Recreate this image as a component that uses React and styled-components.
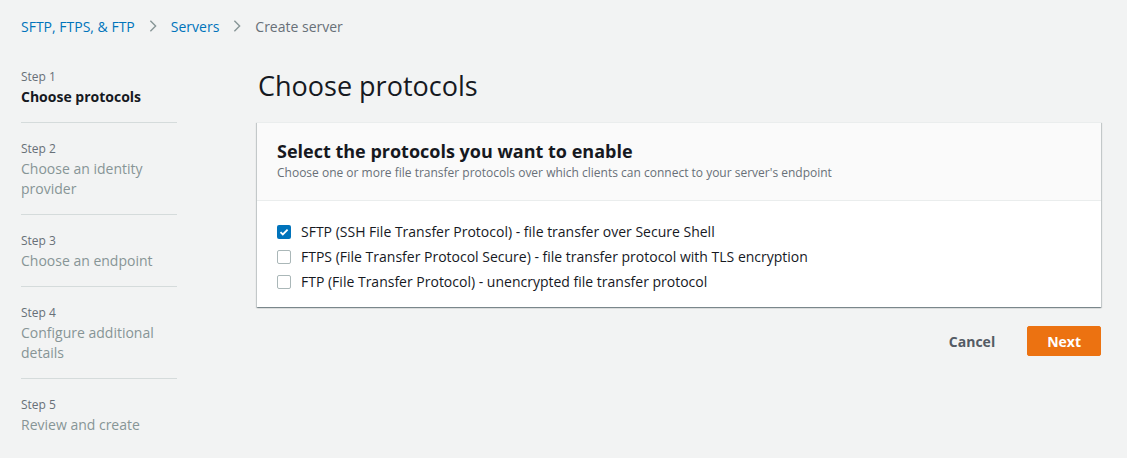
import React from 'react';
import styled, { createGlobalStyle } from 'styled-components';

const GlobalStyle = createGlobalStyle`
  body {
    margin: 0;
    background: #f2f3f3;
    font-family: "Open Sans", "Noto Sans", sans-serif;
    color: #16191f;
  }
`;

const Page = styled.div`
  width: 1127px;
  height: 458px;
  background: #f2f3f3;
  padding: 0 26px 0 21px;
  box-sizing: border-box;
  overflow: hidden;
`;

const Crumbs = styled.nav`
  display: flex;
  align-items: center;
  height: 52px;
  font-size: 14px;
`;

const CrumbLink = styled.a`
  color: #0073bb;
  text-decoration: none;
`;

const CrumbCurrent = styled.span`
  color: #687078;
`;

const Chevron = styled.svg`
  width: 14px;
  height: 14px;
  margin: 0 11px;
`;

const Body = styled.div`
  display: flex;
  gap: 80px;
`;

const Steps = styled.ol`
  list-style: none;
  margin: 15px 0 0;
  padding: 0;
  width: 156px;
  flex-shrink: 0;
`;

const StepItem = styled.li`
  padding: 0 0 15px;
  margin-bottom: 16px;
  border-bottom: ${p => (p.last ? 'none' : '1px solid #d5dbdb')};
`;

const StepNum = styled.div`
  font-size: 12px;
  line-height: 20px;
  color: #687078;
`;

const StepName = styled.div`
  font-size: 14px;
  line-height: 20px;
  color: ${p => (p.active ? '#16191f' : '#879596')};
  font-weight: ${p => (p.active ? 700 : 400)};
`;

const Main = styled.main`
  flex: 1;
  display: flex;
  flex-direction: column;
`;

const Title = styled.h1`
  margin: 16px 0 18px 1px;
  font-size: 27px;
  line-height: 36px;
  font-weight: 400;
  color: #16191f;
`;

const Card = styled.section`
  background: #fff;
  box-shadow: 0 1px 1px 0 rgba(0, 28, 36, 0.3), 1px 1px 1px 0 rgba(0, 28, 36, 0.15),
    -1px 1px 1px 0 rgba(0, 28, 36, 0.15);
  border-top: 1px solid #eaeded;
`;

const CardHeader = styled.header`
  background: #fafafa;
  border-bottom: 1px solid #eaeded;
  padding: 16px 20px 19px;
`;

const CardTitle = styled.h2`
  margin: 0;
  font-size: 18px;
  line-height: 24px;
  font-weight: 700;
`;

const CardDesc = styled.p`
  margin: 2px 0 0;
  font-size: 12px;
  line-height: 16px;
  color: #687078;
`;

const CardBody = styled.div`
  padding: 18px 20px 13px;
  display: flex;
  flex-direction: column;
`;

const Option = styled.label`
  display: flex;
  align-items: center;
  gap: 10px;
  height: 25px;
  font-size: 14px;
  color: #16191f;
`;

const Box = styled.span`
  width: 14px;
  height: 14px;
  box-sizing: border-box;
  border-radius: 2px;
  border: ${p => (p.checked ? 'none' : '1px solid #aab7b8')};
  background: ${p => (p.checked ? '#0073bb' : '#fff')};
  display: flex;
  align-items: center;
  justify-content: center;
`;

const Actions = styled.div`
  display: flex;
  justify-content: flex-end;
  align-items: center;
  gap: 12px;
  margin-top: 19px;
`;

const Button = styled.button`
  font-family: inherit;
  font-size: 14px;
  font-weight: 700;
  height: 30px;
  padding: 0 19px;
  border-radius: 2px;
  cursor: pointer;
  border: 1px solid ${p => (p.primary ? '#ec7211' : 'transparent')};
  background: ${p => (p.primary ? '#ec7211' : 'transparent')};
  color: ${p => (p.primary ? '#fff' : '#545b64')};
`;

const ChevronIcon = () => (
  <Chevron viewBox="0 0 16 16">
    <path d="M5 2l6 6-6 6" fill="none" stroke="#879596" strokeWidth="1.6" />
  </Chevron>
);

const steps = [
  'Choose protocols',
  'Choose an identity provider',
  'Choose an endpoint',
  'Configure additional details',
  'Review and create',
];

const options = [
  { label: 'SFTP (SSH File Transfer Protocol) - file transfer over Secure Shell', checked: true },
  { label: 'FTPS (File Transfer Protocol Secure) - file transfer protocol with TLS encryption', checked: false },
  { label: 'FTP (File Transfer Protocol) - unencrypted file transfer protocol', checked: false },
];

export default function App() {
  return (
    <Page>
      <GlobalStyle />
      <Crumbs>
        <CrumbLink href="#">SFTP, FTPS, &amp; FTP</CrumbLink>
        <ChevronIcon />
        <CrumbLink href="#">Servers</CrumbLink>
        <ChevronIcon />
        <CrumbCurrent>Create server</CrumbCurrent>
      </Crumbs>
      <Body>
        <Steps>
          {steps.map((s, i) => (
            <StepItem key={s} last={i === steps.length - 1}>
              <StepNum>Step {i + 1}</StepNum>
              <StepName active={i === 0}>{s}</StepName>
            </StepItem>
          ))}
        </Steps>
        <Main>
          <Title>Choose protocols</Title>
          <Card>
            <CardHeader>
              <CardTitle>Select the protocols you want to enable</CardTitle>
              <CardDesc>
                Choose one or more file transfer protocols over which clients can connect to your server's endpoint
              </CardDesc>
            </CardHeader>
            <CardBody>
              {options.map(o => (
                <Option key={o.label}>
                  <Box checked={o.checked}>
                    {o.checked && (
                      <svg width="10" height="10" viewBox="0 0 10 10">
                        <path d="M1.5 5.2l2.3 2.3L8.6 2.6" fill="none" stroke="#fff" strokeWidth="1.8" />
                      </svg>
                    )}
                  </Box>
                  {o.label}
                </Option>
              ))}
            </CardBody>
          </Card>
          <Actions>
            <Button>Cancel</Button>
            <Button primary>Next</Button>
          </Actions>
        </Main>
      </Body>
    </Page>
  );
}
